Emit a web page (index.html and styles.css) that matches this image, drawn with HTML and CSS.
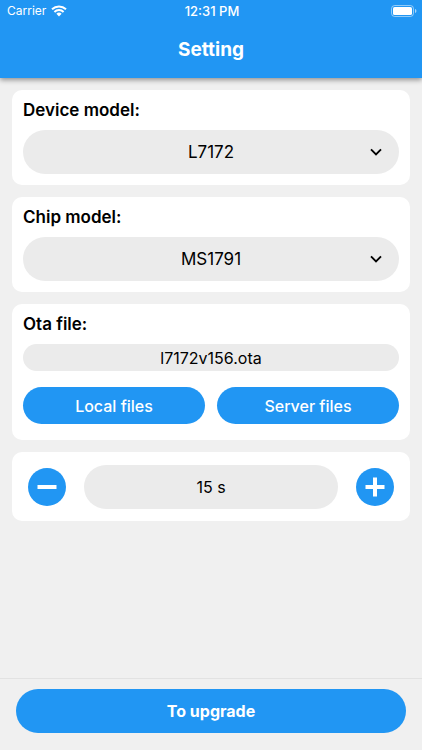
FILE: index.html
```html
<!DOCTYPE html>
<html lang="en">
<head>
<meta charset="utf-8">
<meta name="viewport" content="width=device-width, initial-scale=1">
<title>Setting</title>
<link rel="stylesheet" href="styles.css">
</head>
<body>
<div class="app">
  <header class="header">
    <div class="status">
      <div class="carrier">
        <span>Carrier</span>
        <svg class="wifi" viewBox="0 0 16 12" aria-hidden="true">
          <path d="M1 4.3A10.2 10.2 0 0 1 15 4.3M3.4 6.9a6.7 6.7 0 0 1 9.2 0" fill="none" stroke="currentColor" stroke-width="2"/>
          <path d="M8 11.4 5.4 8.8a3.7 3.7 0 0 1 5.2 0z" fill="currentColor"/>
        </svg>
      </div>
      <span class="time">12:31 PM</span>
      <svg class="battery" viewBox="0 0 26 12" aria-hidden="true">
        <rect x="0.5" y="0.5" width="22" height="11" rx="3.2" fill="none" stroke="currentColor" stroke-opacity="0.5"/>
        <rect x="2" y="2" width="19" height="8" rx="1.6" fill="currentColor"/>
        <path d="M24 4v4c.9-.4 1.4-1.100 1.400-2s-.5-1.600-1.400-2z" fill="currentColor" fill-opacity="0.6"/>
      </svg>
    </div>
    <h1 class="title">Setting</h1>
  </header>

  <main class="content">
    <section class="card">
      <label class="label" for="device">Device model:</label>
      <div class="picker">
        <select class="field" id="device"><option>L7172</option></select>
        <svg class="chevron" viewBox="0 0 12 8" aria-hidden="true"><path d="M1 1.300l5 5 5-5" fill="none" stroke="currentColor" stroke-width="1.900"/></svg>
      </div>
    </section>

    <section class="card">
      <label class="label" for="chip">Chip model:</label>
      <div class="picker">
        <select class="field" id="chip"><option>MS1791</option></select>
        <svg class="chevron" viewBox="0 0 12 8" aria-hidden="true"><path d="M1 1.300l5 5 5-5" fill="none" stroke="currentColor" stroke-width="1.900"/></svg>
      </div>
    </section>

    <section class="card card-file">
      <label class="label" for="ota">Ota file:</label>
      <input class="field field-slim" id="ota" type="text" value="l7172v156.ota" readonly>
      <div class="actions">
        <button class="button" type="button">Local files</button>
        <button class="button" type="button">Server files</button>
      </div>
    </section>

    <section class="card stepper">
      <button class="round" type="button" aria-label="Decrease">
        <svg class="sign" viewBox="0 0 20 20" aria-hidden="true"><path d="M.5 10h19" stroke="currentColor" stroke-width="4"/></svg>
      </button>
      <input class="field" type="text" value="15 s" aria-label="Seconds">
      <button class="round" type="button" aria-label="Increase">
        <svg class="sign" viewBox="0 0 20 20" aria-hidden="true"><path d="M.5 10h19M10 .5v19" stroke="currentColor" stroke-width="4"/></svg>
      </button>
    </section>
  </main>

  <footer class="footer">
    <button class="button button-main" type="button">To upgrade</button>
  </footer>
</div>
</body>
</html>
```
FILE: styles.css
```css
* {
  box-sizing: border-box;
}

body {
  margin: 0;
  background: #f0f0f0;
  color: #000;
  font: 16px/20px Inter, "Liberation Sans", sans-serif;
}

button,
input,
select {
  margin: 0;
  border: 0;
  padding: 0;
  color: inherit;
  font: inherit;
}

svg {
  display: block;
}

.app {
  display: flex;
  flex-direction: column;
  min-height: 100vh;
}

.header {
  padding-bottom: 16px;
  background: #2196f3;
  box-shadow: 0 2px 5px rgba(0, 0, 0, 0.4);
  color: #fff;
}

.status {
  display: grid;
  grid-template-columns: 1fr auto 1fr;
  align-items: center;
  height: 22px;
  padding: 0 5px 0 7px;
  font-size: 12px;
  line-height: 22px;
}

.carrier {
  display: flex;
  align-items: center;
  gap: 5px;
}

.wifi {
  width: 16px;
  height: 12px;
}

.time {
  font-size: 13px;
  font-weight: 500;
}

.battery {
  justify-self: end;
  width: 26px;
  height: 12px;
}

.title {
  margin: 16px 0 0;
  font-size: 19px;
  font-weight: 700;
  line-height: 24px;
  text-align: center;
}

.content {
  display: flex;
  flex: 1;
  flex-direction: column;
  gap: 12px;
  padding: 12px;
}

.card {
  display: flex;
  flex-direction: column;
  gap: 10px;
  padding: 10px 11px 11px;
  border-radius: 10px;
  background: #fff;
}

.card-file {
  padding-bottom: 16px;
}

.label {
  font-size: 17px;
  font-weight: 600;
}

.picker {
  position: relative;
}

.field {
  display: block;
  width: 100%;
  min-width: 0;
  height: 44px;
  border-radius: 22px;
  background: #ebebeb;
  text-align: center;
}

select.field {
  appearance: none;
  font-size: 17px;
  text-align-last: center;
}

.field-slim {
  height: 27px;
}

.chevron {
  position: absolute;
  top: 18px;
  right: 17px;
  width: 12px;
  height: 8px;
  pointer-events: none;
}

.actions {
  display: grid;
  grid-template-columns: 1fr 1fr;
  gap: 12px;
  padding-top: 6px;
}

.button {
  height: 37px;
  border-radius: 22px;
  background: #2196f3;
  color: #fff;
  font-weight: 500;
}

.stepper {
  flex-direction: row;
  align-items: center;
  gap: 18px;
  padding: 13px 16px 12px;
}

.round {
  display: grid;
  flex: none;
  place-items: center;
  width: 38px;
  height: 38px;
  border-radius: 50%;
  background: #2196f3;
  color: #fff;
}

.sign {
  width: 20px;
  height: 20px;
}

.footer {
  padding: 10px 16px 17px;
  border-top: 1px solid #e2e2e2;
}

.button-main {
  width: 100%;
  height: 44px;
  font-weight: 700;
}
```
